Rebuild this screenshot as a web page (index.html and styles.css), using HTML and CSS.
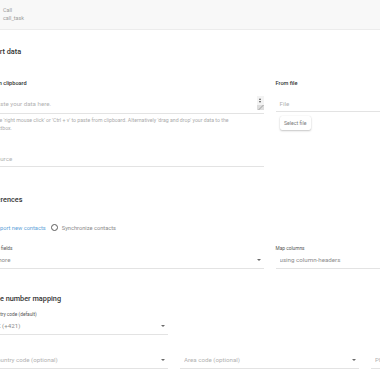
FILE: index.html
```html
<!DOCTYPE html>
<html lang="en">
<head>
<meta charset="utf-8">
<title>Call - import</title>
<link rel="stylesheet" href="styles.css">
</head>
<body>
<div class="header">
  <div class="hdr-line">Call</div>
  <div class="hdr-line">call_task</div>
</div>
<div class="main">
  <section class="section s-import">
    <h2 class="title">Import data</h2>
    <div class="grid2 import-grid">
      <div class="col">
        <div class="group-label">From clipboard</div>
        <div class="textarea">
          <span class="ph grow">Paste your data here.</span>
          <div class="scroll"><span class="sb-up"></span><span class="sb-down"></span><span class="sb-grip"></span></div>
        </div>
        <p class="hint">Use 'right mouse click' or 'Ctrl + v' to paste from clipboard. Alternatively 'drag and drop' your data to the<br>textbox.</p>
        <div class="input source"><span class="ph">Source</span></div>
      </div>
      <div class="col">
        <div class="group-label">From file</div>
        <div class="input file"><span class="ph">File</span></div>
        <button class="btn" type="button">Select file</button>
      </div>
    </div>
  </section>

  <section class="section s-pref">
    <h2 class="title">Preferences</h2>
    <div class="radio-row">
      <label class="radio selected"><span class="circle"></span>Import new contacts</label>
      <label class="radio"><span class="circle"></span>Synchronize contacts</label>
    </div>
    <div class="grid2 pref-grid">
      <div class="col">
        <div class="field-label">Extra fields</div>
        <div class="select"><span class="val grow">Ignore</span><span class="arrow"></span></div>
      </div>
      <div class="col">
        <div class="field-label">Map columns</div>
        <div class="select"><span class="val grow">using column-headers</span><span class="arrow"></span></div>
      </div>
    </div>
  </section>

  <section class="section s-phone">
    <h2 class="title">Phone number mapping</h2>
    <div class="grid3 phone-row1">
      <div class="col">
        <div class="field-label">Country code (default)</div>
        <div class="select"><span class="val grow">SK (+421)</span><span class="arrow"></span></div>
      </div>
    </div>
    <div class="grid3 phone-row2">
      <div class="select"><span class="ph grow">Country code (optional)</span><span class="arrow"></span></div>
      <div class="select"><span class="ph grow">Area code (optional)</span><span class="arrow"></span></div>
      <div class="select"><span class="ph grow">Phone number</span></div>
    </div>
  </section>
</div>
</body>
</html>
```
FILE: styles.css
```css
html, body {
  margin: 0;
  padding: 0;
  width: 380px;
  height: 380px;
  overflow: hidden;
  background: #fff;
  font-family: Roboto, "Liberation Sans", Arial, sans-serif;
}

.header {
  box-sizing: border-box;
  height: 30px;
  padding: 7px 0 0 3px;
  background: #f8f8f8;
  border-bottom: 1px solid #ececec;
  font-size: 5.4px;
  line-height: 7.6px;
  color: #9c9c9c;
}

.main {
  margin-left: -17px;
  width: 640px;
}

.title {
  margin: 0;
  font-size: 7.3px;
  font-weight: 500;
  line-height: 10px;
  color: #333;
}

.s-import .title { margin-top: 17px; }
.s-pref .title { margin-top: 27.7px; }
.s-phone .title { margin-top: 24.4px; }

.grid2 {
  display: grid;
  grid-template-columns: 274.5px 274.5px;
  column-gap: 12px;
  margin-left: 6px;
  align-items: start;
}

.grid3 {
  display: grid;
  grid-template-columns: 179px 179px 179px;
  column-gap: 12px;
  margin-left: 6px;
  align-items: start;
}

.col {
  display: flex;
  flex-direction: column;
  min-width: 0;
}

.import-grid { margin-top: 21.7px; }
.pref-grid { margin-top: 13.5px; }
.phone-row1 { margin-top: 7.5px; }
.phone-row2 { margin-top: 21.3px; }

.group-label {
  font-size: 5.6px;
  font-weight: 500;
  line-height: 8px;
  color: #333;
}

.field-label {
  font-size: 4.8px;
  line-height: 7px;
  color: #555;
}

.grow { flex: 1; min-width: 0; white-space: nowrap; overflow: hidden; }

.ph { color: #b2b2b2; }
.val { color: #8c8c8c; }

.textarea {
  display: flex;
  align-items: flex-start;
  margin-top: 9.3px;
  padding: 4px 0 3px 4px;
  border-bottom: 1px solid #e3e3e3;
  font-size: 6.2px;
  line-height: 8px;
}

.scroll {
  width: 7px;
  height: 14px;
  margin-top: -4px;
  background: #f3f3f3;
  display: flex;
  flex-direction: column;
  align-items: center;
}

.sb-up {
  margin-top: 2px;
  width: 0;
  height: 0;
  border-left: 1.5px solid transparent;
  border-right: 1.5px solid transparent;
  border-bottom: 2px solid #555;
}

.sb-down {
  margin-top: 1px;
  width: 0;
  height: 0;
  border-left: 1.5px solid transparent;
  border-right: 1.5px solid transparent;
  border-top: 2px solid #555;
}

.sb-grip {
  margin-top: auto;
  width: 7px;
  height: 5px;
  background: linear-gradient(135deg, transparent 45%, #bdbdbd 50%, #bdbdbd 60%, transparent 65%), #dcdcdc;
}

.hint {
  margin: 3.2px 0 0;
  padding: 0 0 0 4.5px;
  white-space: nowrap;
  font-size: 5.2px;
  line-height: 7.7px;
  color: #ababab;
}

.input {
  display: flex;
  padding: 0 4px 3px 4px;
  border-bottom: 1px solid #e3e3e3;
  font-size: 6.2px;
  line-height: 8px;
}

.input.source { margin-top: 22.7px; }
.input.file { margin-top: 9.3px; padding-top: 4px; }

.btn {
  align-self: flex-start;
  margin: 4px 0 0 4px;
  height: 14px;
  padding: 0 4.5px;
  border: none;
  border-radius: 2px;
  background: #fff;
  box-shadow: 0 1px 2px rgba(0, 0, 0, 0.22), 0 0 1px rgba(0, 0, 0, 0.12);
  font-family: inherit;
  font-size: 5.2px;
  line-height: 14px;
  color: #7a7a7a;
}

.radio-row {
  display: flex;
  align-items: center;
  gap: 5.5px;
  margin-top: 18.7px;
  font-size: 5.7px;
  line-height: 8px;
  color: #8a8a8a;
}

.radio {
  display: flex;
  align-items: center;
}

.circle {
  box-sizing: border-box;
  width: 7px;
  height: 7px;
  margin-right: 3.5px;
  border: 1.3px solid #5a5a5a;
  border-radius: 50%;
}

.radio.selected { color: #5e9fd8; }
.radio.selected .circle {
  border-color: #5e9fd8;
  background: radial-gradient(circle, #5e9fd8 40%, transparent 45%);
}

.select {
  display: flex;
  align-items: center;
  padding: 0 3px 4px 4px;
  border-bottom: 1px solid #e3e3e3;
  font-size: 6.2px;
  line-height: 8px;
}

.pref-grid .select,
.phone-row1 .select { margin-top: 4px; }

.arrow {
  width: 0;
  height: 0;
  margin-left: 4px;
  border-left: 2px solid transparent;
  border-right: 2px solid transparent;
  border-top: 2.5px solid #6a6a6a;
}
```
